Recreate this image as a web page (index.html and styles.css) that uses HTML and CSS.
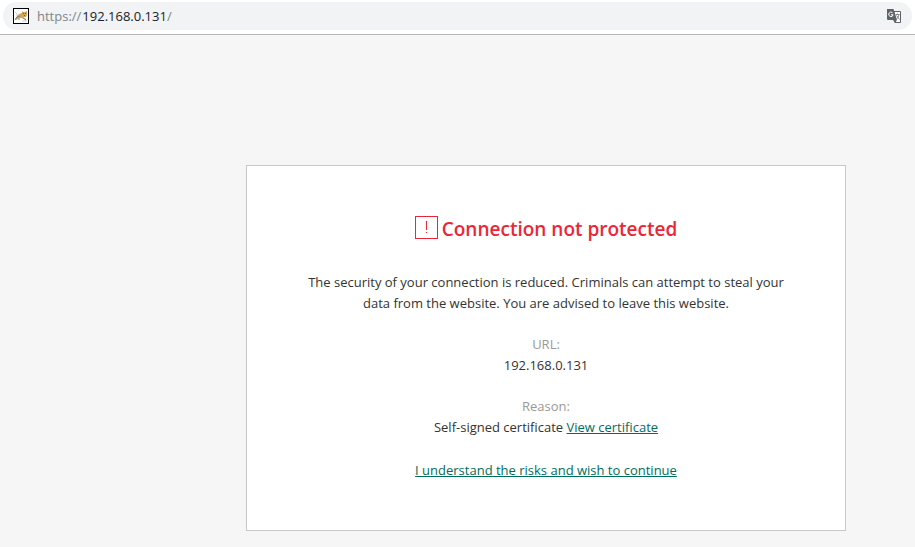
FILE: index.html
```html
<!DOCTYPE html>
<html lang="en">
<head>
<meta charset="utf-8">
<meta name="viewport" content="width=device-width, initial-scale=1">
<title>Connection not protected</title>
<link rel="stylesheet" href="styles.css">
</head>
<body>
<header class="toolbar">
  <form class="omnibox">
    <svg class="site-icon" viewBox="0 0 16 16" aria-hidden="true">
      <rect x=".5" y=".5" width="15" height="15" fill="#fff" stroke="#000"/>
      <path d="M2 4l2 2M3 7h2M9 13h5" stroke="#c9cdd2" fill="none"/>
      <path d="M9 3l1 1h2l2-1v4l-1 2H10l3 2v1l-4-2-3 0-3 2-1-1 2-3 2-2 3-1z" fill="#d0a45a"/>
      <path d="M2 12l2-3 3-1M5 11h2M10 10l3 2" stroke="#8a8270" fill="none"/>
      <path d="M10 5h1v1h-1zM12 5h1v1h-1zM11 7h1v1h-1z" fill="#8a6428"/>
    </svg>
    <label class="scheme" for="address">https://</label>
    <input class="address" id="address" type="text" value="192.168.0.131" size="11" spellcheck="false">
    <span class="path">/</span>
    <button class="translate" type="button" aria-label="Translate this page">
      <svg viewBox="0 0 16 16" aria-hidden="true">
        <path d="M8 3.500h6.500v11H9z" fill="#fff" stroke="#5f6368"/>
        <path d="M1 1h6.500l3.500 11H2a1 1 0 0 1-1-1z" fill="#5f6368"/>
        <path d="M7 12h4l-2 3z" fill="#5f6368"/>
        <path d="M6.500 4.800a2.200 2.200 0 1 0 .6 2H5" fill="none" stroke="#fff"/>
        <path d="M9.500 6.500h4M11.500 5.500v1M13 6.500c-.4 2-1.400 3.500-2.500 4.500M10.500 7.500l3 4" fill="none" stroke="#777b80" stroke-width=".9"/>
      </svg>
    </button>
  </form>
</header>
<main class="page">
  <section class="card">
    <h1 class="title">
      <svg class="alert-icon" viewBox="0 0 23 23" aria-hidden="true">
        <rect x=".5" y=".5" width="22" height="22" fill="none" stroke="#eb2638"/>
        <path d="M11 5h1v9h-1zM11 16h1v1h-1z" fill="#eb2638"/>
      </svg>
      <span>Connection not protected</span>
    </h1>
    <p class="message">The security of your connection is reduced. Criminals can attempt to steal your data from the website. You are advised to leave this website.</p>
    <dl class="details">
      <div>
        <dt>URL:</dt>
        <dd>192.168.0.131</dd>
      </div>
      <div>
        <dt>Reason:</dt>
        <dd>Self-signed certificate <a href="#certificate">View certificate</a></dd>
      </div>
    </dl>
    <a class="continue" href="#continue">I understand the risks and wish to continue</a>
  </section>
</main>
</body>
</html>
```

FILE: styles.css
```css
* {
  box-sizing: border-box;
}

body {
  margin: 0;
  background: #f6f6f6;
  color: #333;
  font: 13px/21px "Open Sans", "Noto Sans", sans-serif;
}

.toolbar {
  padding: 2px 3px 4px;
  background: #fff;
  border-bottom: 1px solid #b6b6b6;
}

.omnibox {
  display: flex;
  align-items: center;
  height: 28px;
  padding: 0 10px;
  border-radius: 14px;
  background: #f1f3f4;
}

.site-icon {
  width: 16px;
  height: 16px;
  margin-right: 8px;
}

.scheme,
.path {
  color: #80868b;
}

.scheme {
  padding-right: 1px;
}

.address {
  field-sizing: content;
  padding: 0;
  border: 0;
  outline: 0;
  background: none;
  color: #202124;
  font: inherit;
}

.translate {
  display: flex;
  margin-left: auto;
  padding: 0;
  border: 0;
  background: none;
}

.translate svg {
  width: 16px;
  height: 16px;
}

.page {
  display: flex;
  justify-content: flex-end;
  padding: 130px 69px 16px;
}

.card {
  flex: 0 1 600px;
  padding: 48px 52px 49px;
  background: #fff;
  border: 1px solid #c8c8c8;
  text-align: center;
}

.title {
  display: flex;
  align-items: center;
  justify-content: center;
  gap: 4px;
  margin: 0 0 28px;
  color: #eb2638;
  font-size: 19px;
  font-weight: 600;
  line-height: 30px;
}

.alert-icon {
  width: 23px;
  height: 23px;
  margin-bottom: 3px;
}

.message {
  margin: 0 0 20px;
}

.details {
  display: grid;
  gap: 20px;
  margin: 0 0 22px;
}

.details dt {
  color: #999;
}

.details dd {
  margin: 0;
}

a {
  color: #006d5c;
}

.continue {
  display: inline-block;
}
```
